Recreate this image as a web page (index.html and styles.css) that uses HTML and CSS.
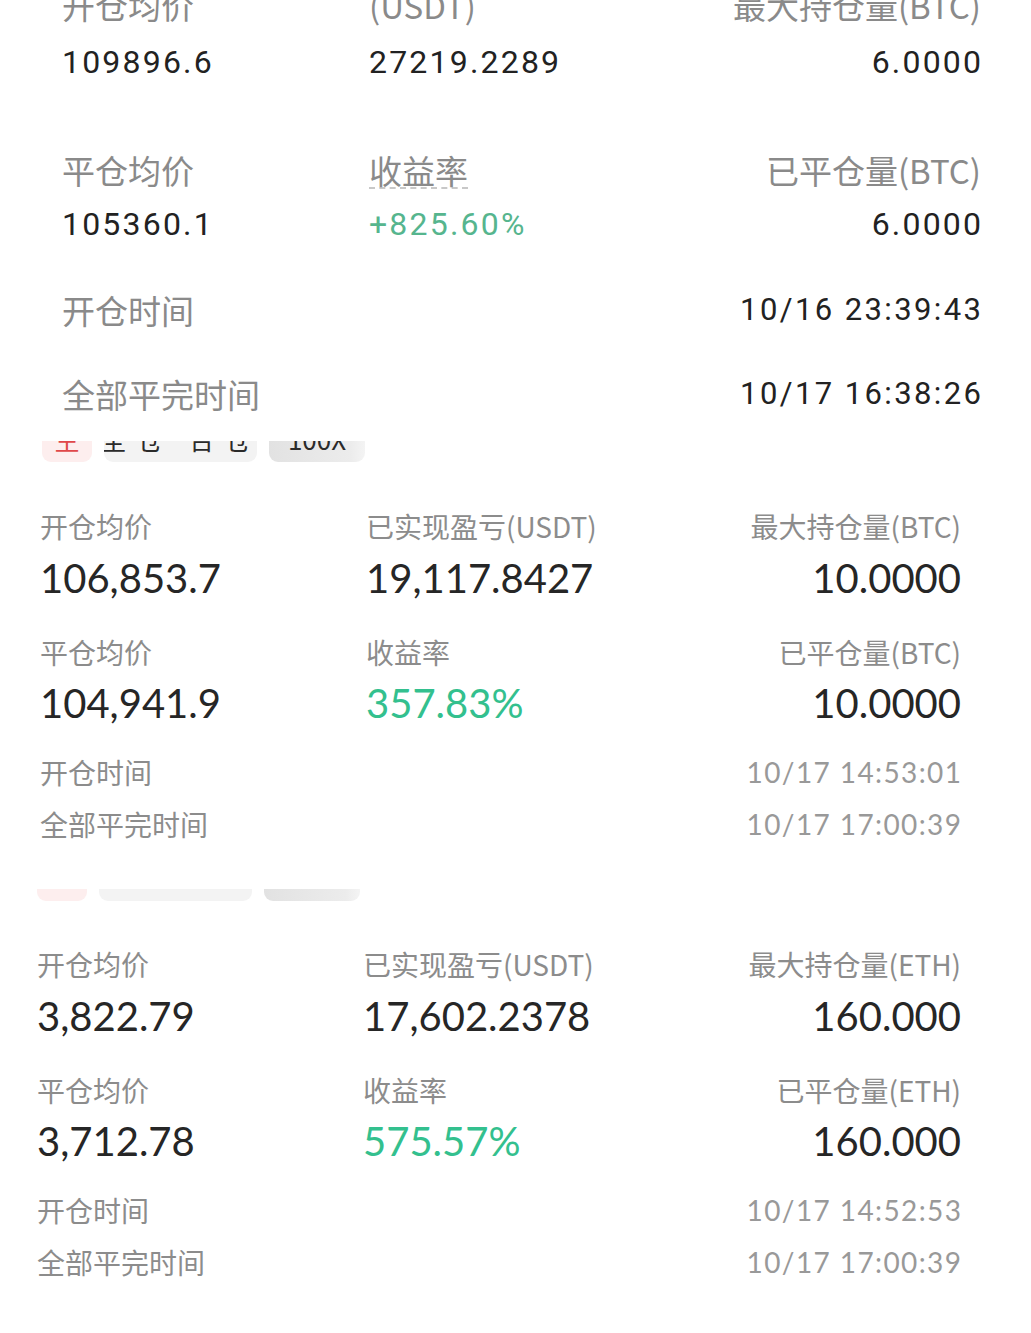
FILE: index.html
```html
<!DOCTYPE html>
<html lang="zh-CN">
<head>
<meta charset="utf-8">
<title>仓位历史</title>
<link rel="stylesheet" href="styles.css">
</head>
<body>
<div class="page">

  <section class="blk blk-a">
    <div class="row row-a">
      <div class="cell"><div class="lbl">开仓均价</div><div class="val">109896.6</div></div>
      <div class="cell"><div class="lbl">(USDT)</div><div class="val">27219.2289</div></div>
      <div class="cell right"><div class="lbl">最大持仓量(BTC)</div><div class="val">6.0000</div></div>
    </div>
    <div class="row row-a row-a2">
      <div class="cell"><div class="lbl">平仓均价</div><div class="val">105360.1</div></div>
      <div class="cell"><div class="lbl"><span class="dotted">收益率</span></div><div class="val green-a">+825.60%</div></div>
      <div class="cell right"><div class="lbl">已平仓量(BTC)</div><div class="val">6.0000</div></div>
    </div>
    <div class="trow trow-a trow-a1"><span class="lbl">开仓时间</span><span class="tval">10/16 23:39:43</span></div>
    <div class="trow trow-a trow-a2"><span class="lbl">全部平完时间</span><span class="tval">10/17 16:38:26</span></div>
  </section>

  <section class="blk blk-b">
    <div class="chips chips-b">
      <div class="chip chip-red chip1"><span>空</span></div>
      <div class="chip chip-grey chip2"><span>全仓 合仓</span></div>
      <div class="chip chip-dark chip3"><span>100X</span></div>
    </div>
    <div class="row row-b">
      <div class="cell"><div class="lbl">开仓均价</div><div class="val">106,853.7</div></div>
      <div class="cell"><div class="lbl">已实现盈亏(USDT)</div><div class="val">19,117.8427</div></div>
      <div class="cell right"><div class="lbl">最大持仓量(BTC)</div><div class="val">10.0000</div></div>
    </div>
    <div class="row row-b row-b2">
      <div class="cell"><div class="lbl">平仓均价</div><div class="val">104,941.9</div></div>
      <div class="cell"><div class="lbl">收益率</div><div class="val green">357.83%</div></div>
      <div class="cell right"><div class="lbl">已平仓量(BTC)</div><div class="val">10.0000</div></div>
    </div>
    <div class="trow trow-b trow-b1"><span class="lbl">开仓时间</span><span class="tval">10/17 14:53:01</span></div>
    <div class="trow trow-b trow-b2"><span class="lbl">全部平完时间</span><span class="tval">10/17 17:00:39</span></div>
  </section>

  <section class="blk blk-c">
    <div class="chips chips-c">
      <div class="chip chip-red chip1"></div>
      <div class="chip chip-grey chip2"></div>
      <div class="chip chip-dark chip3"></div>
    </div>
    <div class="row row-b">
      <div class="cell"><div class="lbl">开仓均价</div><div class="val">3,822.79</div></div>
      <div class="cell"><div class="lbl">已实现盈亏(USDT)</div><div class="val">17,602.2378</div></div>
      <div class="cell right"><div class="lbl">最大持仓量(ETH)</div><div class="val">160.000</div></div>
    </div>
    <div class="row row-b row-b2">
      <div class="cell"><div class="lbl">平仓均价</div><div class="val">3,712.78</div></div>
      <div class="cell"><div class="lbl">收益率</div><div class="val green">575.57%</div></div>
      <div class="cell right"><div class="lbl">已平仓量(ETH)</div><div class="val">160.000</div></div>
    </div>
    <div class="trow trow-b trow-b1"><span class="lbl">开仓时间</span><span class="tval">10/17 14:52:53</span></div>
    <div class="trow trow-b trow-b2"><span class="lbl">全部平完时间</span><span class="tval">10/17 17:00:39</span></div>
  </section>

</div>
</body>
</html>
```

FILE: styles.css
```css
html, body {
  margin: 0;
  padding: 0;
  background: #ffffff;
}

body {
  font-family: "Noto Sans CJK SC", "Noto Sans", sans-serif;
  color: #262626;
  overflow: hidden;
}

.page {
  width: 1031px;
  height: 1333px;
  overflow: hidden;
  background: #ffffff;
}

.blk {
  display: flex;
  flex-direction: column;
}

.row {
  display: grid;
}

.cell.right {
  text-align: right;
}

.trow {
  display: flex;
  justify-content: space-between;
  align-items: center;
}

/* ---------- Section A (top, enlarged) ---------- */
.blk-a {
  margin-top: -15px;
  padding: 0 50px 27px 62px;
}

.row-a {
  grid-template-columns: 307px 1fr auto;
}

.row-a .lbl,
.trow-a .lbl {
  font-size: 33px;
  line-height: 40px;
  color: #8a8a8a;
}

.row-a .val {
  font-family: Roboto, "Noto Sans", sans-serif;
  font-size: 32px;
  line-height: 40px;
  letter-spacing: 2.2px;
  color: #222222;
  margin-top: 17px;
}

.row-a .cell.right .val {
  margin-right: -2.2px;
}

.row-a2 {
  margin-top: 68px;
}

.row-a2 .val {
  margin-top: 14px;
}

.dotted {
  display: inline-block;
  line-height: 34px;
  border-bottom: 2px dashed #c8c8c8;
}

.row-a .val.green-a {
  color: #56b58e;
}

.trow-a {
  line-height: 40px;
}

.trow-a .tval {
  font-family: Roboto, "Noto Sans", sans-serif;
  font-size: 31px;
  letter-spacing: 2.4px;
  color: #222222;
  margin-right: -2.4px;
}

.trow-a1 {
  margin-top: 46px;
}

.trow-a2 {
  margin-top: 44px;
}

/* ---------- Chips ---------- */
.chips {
  display: flex;
  gap: 12px;
}

.chip {
  border-radius: 0 0 9px 9px;
  overflow: hidden;
  display: flex;
  align-items: flex-end;
  justify-content: center;
}

.chip span {
  font-size: 26px;
  line-height: 26px;
  padding-bottom: 10px;
  white-space: nowrap;
}

.chip-red {
  background: #fdeeee;
  color: #e0484a;
}

.chip-grey {
  background: #f3f3f3;
  color: #2a2a2a;
}

.chip-dark {
  background: linear-gradient(90deg, #e2e2e2, #ececec 85%, #f4f4f4);
  color: #2a2a2a;
}

.chip1 { width: 50px; }
.chip2 { width: 153px; }
.chip3 { width: 96px; }

.chip2 span {
  letter-spacing: 10px;
}

.chips-b {
  height: 21px;
  margin-left: 2px;
}

.chips-c {
  height: 12px;
}

/* ---------- Sections B & C ---------- */
.blk-b {
  padding: 0 70px 47px 40px;
}

.blk-c {
  padding: 0 70px 0 37px;
}

.row-b {
  grid-template-columns: 326px 1fr auto;
  margin-top: 46px;
}

.blk-c .row-b {
  margin-top: 45px;
}

.row-b .lbl,
.trow-b .lbl {
  font-size: 28px;
  line-height: 36px;
  color: #8c8c8c;
}

.row-b .val {
  font-family: Lato, "Noto Sans", sans-serif;
  font-size: 40px;
  line-height: 44px;
  color: #262626;
  margin-top: 12px;
}

.row-b.row-b2 {
  margin-top: 34px;
}

.row-b2 .val {
  margin-top: 11px;
}

.row-b .val.green {
  color: #33c08e;
}

.trow-b {
  line-height: 36px;
}

.trow-b .tval {
  font-family: Lato, "Noto Sans", sans-serif;
  font-size: 28px;
  letter-spacing: 1.4px;
  color: #999999;
  margin-right: -1.4px;
}

.trow-b1 {
  margin-top: 29px;
}

.trow-b2 {
  margin-top: 16px;
}
```
